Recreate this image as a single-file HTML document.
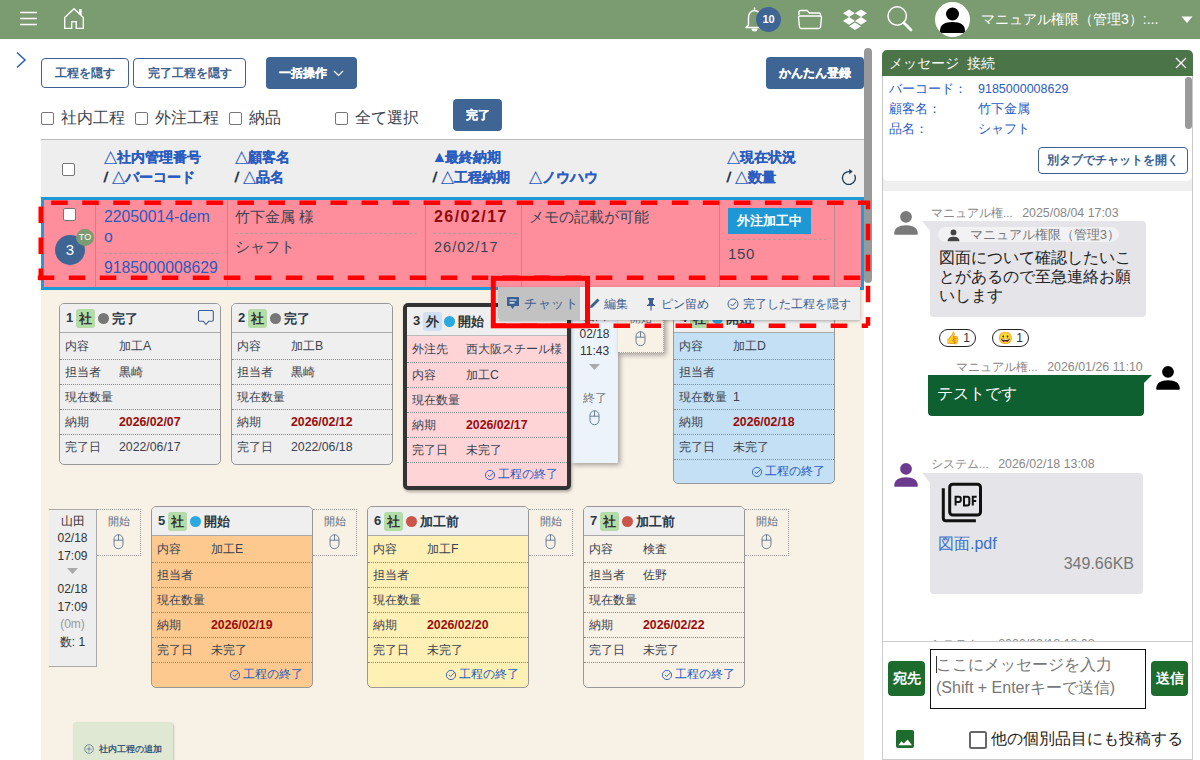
<!DOCTYPE html>
<html><head><meta charset="utf-8">
<style>
*{box-sizing:border-box;margin:0;padding:0}
html,body{width:1200px;height:760px;overflow:hidden;background:#fff;font-family:"Liberation Sans",sans-serif;color:#333}
.abs{position:absolute}
#hdr{position:absolute;left:0;top:0;width:1200px;height:39px;background:#7b9b71}
.btn-o{position:absolute;height:30px;border:1px solid #3d6090;border-radius:4px;background:#fff;color:#3d6090;font-weight:bold;font-size:12px;display:flex;align-items:center;justify-content:center}
.btn-b{position:absolute;background:#3f6594;border-radius:4px;color:#fff;font-weight:bold;font-size:12px;display:flex;align-items:center;justify-content:center}
.cb{position:absolute;width:13px;height:13px;border:1px solid #767676;border-radius:2px;background:#fff}
.t{position:absolute;white-space:nowrap}
.lbl{position:absolute;font-size:16px;color:#3b4350;line-height:16px;white-space:nowrap}
.hd{position:absolute;font-size:14px;font-weight:bold;color:#2a5bbf;line-height:20px;white-space:nowrap}
.hd b{color:#243447;font-weight:bold;-webkit-text-stroke:0.2px #243447;display:inline-block;transform:skewX(-8deg)}
.hd{-webkit-text-stroke:0.15px currentColor}
.hd u{text-decoration:none;-webkit-text-stroke:0;font-weight:normal;font-size:16.5px;line-height:0}
.hd u.f{font-size:16px;letter-spacing:-2px;margin-left:-1.5px}
/* cards */
.card{position:absolute;width:162px;border:1px solid #999;border-radius:5px;background:#efefef;overflow:hidden}
.card .ch{height:29px;border-bottom:1px solid #aaa;background:#efefef;position:relative;font-size:13px;font-weight:bold;color:#2d3846}
.card .row{height:25px;border-bottom:1px dotted #888;position:relative;font-size:12.3px;color:#3b4350}
.card .ch + .row{height:27px}
.card .ch + .row span,.card .ch + .row i{top:6px}
.card .row span{position:absolute;left:5px;top:5px;line-height:15px;white-space:nowrap}
.card .row i{position:absolute;left:59px;top:5px;font-style:normal;line-height:15px;white-space:nowrap}
.card .row i.red{color:#990c0c;font-weight:bold}
.card .ft{height:25px;position:relative;font-size:12.3px;color:#2a5bbf}
.badge{position:absolute;top:5px;height:19px;padding:0 3px;border-radius:3px;background:#b4dca6;color:#333;font-size:13px;font-weight:bold;line-height:19px}
.dot{position:absolute;top:9px;width:11px;height:11px;border-radius:50%}
.btn-b{-webkit-text-stroke:0.2px currentColor}
</style></head><body>
<div id="hdr">
  <svg class="abs" style="left:20px;top:11px" width="18" height="15" viewBox="0 0 18 15"><path d="M0 1.5H17M0 7.5H17M0 13.5H17" stroke="#fff" stroke-width="1.6"/></svg>
  <svg class="abs" style="left:56px;top:4px" width="36" height="30" viewBox="0 0 36 30"><path d="M23.1 5.1 H25.7 V11.6 L23.1 9.2Z" fill="#fff"/><path d="M8.7 24.4 V13.6 L18 4.8 L27.3 13.6 V24.4 H20.2 V17.6 H15.7 V24.4 Z" fill="none" stroke="#fff" stroke-width="1.4" stroke-linejoin="miter"/></svg>
  <svg class="abs" style="left:745px;top:6px" width="19" height="27" viewBox="0 0 19 27"><path d="M9.5 1.5 V3.5 M3.5 19 V11 A6 6.5 0 0 1 15.5 11 V19 L18 21.5 H1 L3.5 19Z" fill="none" stroke="#fff" stroke-width="1.4" stroke-linejoin="round"/><path d="M6.5 22.5 A3 3 0 0 0 12.5 22.5Z" fill="#fff"/></svg>
  <div class="abs" style="left:756px;top:7px;width:25px;height:25px;border-radius:50%;background:#3f6594;color:#fff;font-weight:bold;font-size:11px;text-align:center;line-height:25px">10</div>
  <svg class="abs" style="left:797px;top:9px" width="26" height="21" viewBox="0 0 26 21"><path d="M2 6 V3 Q2 1.5 3.5 1.5 H10 L12.5 4 H22 Q23.5 4 23.5 5.5 V7" fill="none" stroke="#fff" stroke-width="1.4" stroke-linejoin="round"/><path d="M1.5 8.5 Q1.5 7 3 7 H23 Q24.5 7 24.5 8.5 L23.5 18 Q23.3 19.5 21.8 19.5 H4.2 Q2.7 19.5 2.5 18Z" fill="none" stroke="#fff" stroke-width="1.4" stroke-linejoin="round"/></svg>
  <svg class="abs" style="left:842px;top:9px" width="26" height="22" viewBox="0 0 26 22"><path d="M7 0.5 L13 4.3 L7 8.1 L1 4.3Z M19 0.5 L25 4.3 L19 8.1 L13 4.3Z M7 8.1 L13 11.9 L7 15.7 L1 11.9Z M19 8.1 L25 11.9 L19 15.7 L13 11.9Z M13 13.5 L19 17.3 L13 21.1 L7 17.3Z" fill="#fff"/></svg>
  <svg class="abs" style="left:886px;top:6px" width="27" height="26" viewBox="0 0 27 26"><circle cx="11.2" cy="10" r="9.2" fill="none" stroke="#fff" stroke-width="1.5"/><path d="M17.8 16.8 L25 24" stroke="#fff" stroke-width="2.8" stroke-linecap="round"/></svg>
  <div class="abs" style="left:935px;top:2px;width:35px;height:35px;border-radius:50%;background:#fff;overflow:hidden">
   <svg width="35" height="35" viewBox="0 0 35 35"><circle cx="17.5" cy="12" r="6.5" fill="#000"/><path d="M5 29 Q5 20 17.5 20 Q30 20 30 29 V31 H5Z" fill="#000"/></svg>
  </div>
  <div class="t" style="left:981px;top:10px;font-size:14px;color:#fff;line-height:18px">マニュアル権限（管理3）:...</div>
  <svg class="abs" style="left:1181px;top:16px" width="12" height="8" viewBox="0 0 12 8"><path d="M0.5 0.5H11.5L6 7Z" fill="#fff"/></svg>
</div>

<!-- main area -->
<svg class="abs" style="left:15px;top:51px" width="12" height="18" viewBox="0 0 12 18"><path d="M2 1.5 L10 9 L2 16.5" fill="none" stroke="#2a5bbf" stroke-width="1.5"/></svg>
<div class="btn-o" style="left:41px;top:58px;width:88px">工程を隠す</div>
<div class="btn-o" style="left:133px;top:58px;width:113px">完了工程を隠す</div>
<div class="btn-b" style="left:266px;top:57px;width:91px;height:32px">一括操作 <svg style="margin-left:6px" width="11" height="7" viewBox="0 0 11 7"><path d="M1 1 L5.5 5.5 L10 1" fill="none" stroke="#fff" stroke-width="1.2"/></svg></div>
<div class="btn-b" style="left:766px;top:57px;width:98px;height:32px">かんたん登録</div>

<div class="cb" style="left:41px;top:112px"></div><div class="lbl" style="left:61px;top:110px">社内工程</div>
<div class="cb" style="left:135px;top:112px"></div><div class="lbl" style="left:155px;top:110px">外注工程</div>
<div class="cb" style="left:229px;top:112px"></div><div class="lbl" style="left:249px;top:110px">納品</div>
<div class="cb" style="left:335px;top:112px"></div><div class="lbl" style="left:355px;top:110px">全て選択</div>
<div class="btn-b" style="left:453px;top:99px;width:49px;height:32px">完了</div>

<!-- table header -->
<div class="abs" style="left:41px;top:139px;width:823px;height:58px;background:#eeeeee;border-top:1px solid #bbb"></div>
<div class="cb" style="left:62px;top:163px"></div>
<div class="hd" style="left:104px;top:147px"><u>△</u>社内管理番号<br><b>/</b> <u>△</u>バーコード</div>
<div class="hd" style="left:235px;top:147px"><u>△</u>顧客名<br><b>/</b> <u>△</u>品名</div>
<div class="hd" style="left:433px;top:147px"><u class="f">▲</u>最終納期<br><b>/</b> <u>△</u>工程納期</div>
<div class="hd" style="left:529px;top:167px"><u>△</u>ノウハウ</div>
<div class="hd" style="left:727px;top:147px"><u>△</u>現在状況<br><b>/</b> <u>△</u>数量</div>
<svg class="abs" style="left:840px;top:167px" width="18" height="18" viewBox="0 0 18 18"><path d="M9.4 4.55 A6.45 6.45 0 1 0 14.49 7.78" fill="none" stroke="#1f3a52" stroke-width="1.3"/><path d="M9.2 2 L12.7 4.6 L9.2 7.2Z" fill="#1f3a52"/></svg>

<!-- beige content -->
<div class="abs" style="left:41px;top:288px;width:823px;height:472px;background:#f8f1e6"></div>

<!-- selected row -->
<div class="abs" style="left:41px;top:197px;width:823px;height:93px;background:#ff8e9c;border:3px solid #1e9bd7"></div>
<div class="abs" style="left:95px;top:200px;width:1px;height:87px;background:#c0868d"></div>
<div class="abs" style="left:227px;top:200px;width:1px;height:87px;background:#c0868d"></div>
<div class="abs" style="left:425px;top:200px;width:1px;height:87px;background:#c0868d"></div>
<div class="abs" style="left:521px;top:200px;width:1px;height:87px;background:#c0868d"></div>
<div class="abs" style="left:719px;top:200px;width:1px;height:87px;background:#c0868d"></div>
<div class="abs" style="left:834px;top:200px;width:1px;height:87px;background:#c0868d"></div>
<div class="cb" style="left:63px;top:208px"></div>
<div class="abs" style="left:55px;top:235px;width:30px;height:30px;border-radius:50%;background:#3f6594;color:#fff;font-size:15px;text-align:center;line-height:30px">3</div>
<div class="abs" style="left:76px;top:229px;width:18px;height:17px;border-radius:50%;background:#7b9b71;color:#fff;font-size:9px;text-align:center;line-height:17px">TO</div>
<div class="t" style="left:104px;top:207px;font-size:15.75px;line-height:20px;color:#2a5bbf">22050014-dem<br>o</div>
<div class="abs" style="left:104px;top:253px;width:115px;border-top:1px dashed #b99"></div>
<div class="t" style="left:104px;top:259px;font-size:15.75px;line-height:18px;color:#2a5bbf">9185000008629</div>
<div class="t" style="left:235px;top:207px;font-size:14.5px;line-height:20px;color:#3b4350">竹下金属 様</div>
<div class="abs" style="left:235px;top:233px;width:182px;border-top:1px dashed #b99"></div>
<div class="t" style="left:235px;top:237px;font-size:14.5px;line-height:20px;color:#3b4350">シャフト</div>
<div class="t" style="left:434px;top:207px;font-size:16px;line-height:20px;color:#8f0a0a;font-weight:bold;letter-spacing:1.45px">26/02/17</div>
<div class="abs" style="left:433px;top:233px;width:84px;border-top:1px dashed #b99"></div>
<div class="t" style="left:434px;top:237px;font-size:14.5px;line-height:20px;color:#3b4350;letter-spacing:1px">26/02/17</div>
<div class="t" style="left:529px;top:207px;font-size:14.5px;line-height:20px;color:#3b4350">メモの記載が可能</div>
<div class="abs" style="left:728px;top:208px;width:83px;height:26px;background:#1e98d4;color:#fff;font-weight:bold;font-size:13px;text-align:center;line-height:26px">外注加工中</div>
<div class="abs" style="left:727px;top:239px;width:100px;border-top:1px dashed #b99"></div>
<div class="t" style="left:728px;top:244px;font-size:15px;line-height:20px;color:#3b4350;letter-spacing:0.6px">150</div>


<!-- mouse icon symbol -->
<svg width="0" height="0" style="position:absolute"><defs>
<g id="mouse"><rect x="1" y="0.7" width="9" height="14" rx="4.5" fill="none" stroke="#6a7f95" stroke-width="1"/><path d="M1 6.2H10M5.5 0.7V6.2" stroke="#6a7f95" stroke-width="1"/></g>
<g id="chk2"><circle cx="6" cy="6" r="5" fill="none" stroke="#3d6090" stroke-width="1"/><path d="M3.5 6 L5.5 8 L9 4" fill="none" stroke="#3d6090" stroke-width="1"/></g><g id="chk"><circle cx="6" cy="6" r="4.6" fill="none" stroke="#2a5bbf" stroke-width="0.9"/><path d="M3.8 5.8 L5.6 7.6 L9.8 3.2" fill="none" stroke="#2a5bbf" stroke-width="0.9"/></g>
</defs></svg>

<!-- card 1 -->
<div class="card" style="left:59px;top:303px;height:162px">
 <div class="ch"><span class="t" style="left:6px;top:6px">1</span><span class="badge" style="left:16px">社</span><span class="dot" style="left:38px;background:#777"></span><span class="t" style="left:52px;top:6px">完了</span>
 <svg class="abs" style="left:137px;top:5px" width="18" height="17" viewBox="0 0 18 17"><path d="M1.5 3 Q1.5 1.5 3 1.5 H14.8 Q16.3 1.5 16.3 3 V10.7 Q16.3 12.2 14.8 12.2 H11.8 L9 15.5 L6.2 12.2 H3 Q1.5 12.2 1.5 10.7Z" fill="none" stroke="#3d6090" stroke-width="1.1" stroke-linejoin="round"/></svg></div>
 <div class="row"><span>内容</span><i>加工A</i></div>
 <div class="row"><span>担当者</span><i>黒崎</i></div>
 <div class="row"><span>現在数量</span><i></i></div>
 <div class="row"><span>納期</span><i class="red">2026/02/07</i></div>
 <div class="row" style="border-bottom:none"><span>完了日</span><i>2022/06/17</i></div>
</div>
<!-- card 2 -->
<div class="card" style="left:231px;top:303px;height:162px">
 <div class="ch"><span class="t" style="left:6px;top:6px">2</span><span class="badge" style="left:16px">社</span><span class="dot" style="left:38px;background:#777"></span><span class="t" style="left:52px;top:6px">完了</span></div>
 <div class="row"><span>内容</span><i>加工B</i></div>
 <div class="row"><span>担当者</span><i>黒崎</i></div>
 <div class="row"><span>現在数量</span><i></i></div>
 <div class="row"><span>納期</span><i class="red">2026/02/12</i></div>
 <div class="row" style="border-bottom:none"><span>完了日</span><i>2022/06/18</i></div>
</div>

<!-- timeline after card3 -->
<div class="abs" style="left:571px;top:300px;width:47px;height:163px;background:#edf3fb;box-shadow:2px 2px 5px rgba(0,0,0,.35)">
 <div class="t" style="left:0;width:47px;text-align:center;top:8px;font-size:12px;line-height:17.5px;color:#333">山田<br>02/18<br>11:43</div>
 <svg class="abs" style="left:18px;top:64px" width="11" height="7"><path d="M0 0H11L5.5 6Z" fill="#aaa"/></svg>
 <div class="t" style="left:0;width:47px;text-align:center;top:90px;font-size:12px;color:#777">終了</div>
 <svg class="abs" style="left:18px;top:110px" width="11" height="16"><use href="#mouse"/></svg>
</div>
<div class="abs" style="left:618px;top:306px;width:46px;height:47px;border:1px dotted #999;border-left:none;background:#f8f1e6;box-shadow:2px 2px 5px rgba(0,0,0,.35)">
 <div class="t" style="left:0;width:45px;text-align:center;top:4px;font-size:11px;color:#5a6f86">開始</div>
 <svg class="abs" style="left:17px;top:24px" width="11" height="16"><use href="#mouse"/></svg>
</div>

<!-- card 3 (selected) -->
<div class="abs" style="left:403px;top:303px;width:168px;height:187px;border:4px solid #333;border-radius:5px;background:#ffd4d7;overflow:hidden;box-shadow:1px 2px 3px rgba(0,0,0,.3)">
 <div style="position:relative;height:29px;background:#efefef;border-bottom:1px solid #bbb;font-size:13px;font-weight:bold;color:#333"><span class="t" style="left:6px;top:6px">3</span><span class="badge" style="left:16px;background:#cde0f5">外</span><span class="dot" style="left:37px;background:#2aa9e0"></span><span class="t" style="left:51px;top:6px">開始</span></div>
 <div class="card" style="position:relative;left:0;top:0;width:160px;border:none;border-radius:0;background:transparent">
 <div class="row" style="height:27px"><span style="top:6px">外注先</span><i style="top:6px">西大阪スチール様</i></div>
 <div class="row"><span>内容</span><i>加工C</i></div>
 <div class="row"><span>現在数量</span><i></i></div>
 <div class="row"><span>納期</span><i class="red">2026/02/17</i></div>
 <div class="row"><span>完了日</span><i>未完了</i></div>
 <div class="ft"><svg class="abs" style="left:77px;top:6px" width="12" height="12"><use href="#chk"/></svg><span class="t" style="left:91px;top:3px">工程の終了</span></div>
 </div>
</div>

<!-- card 4 -->
<div class="card" style="left:673px;top:303px;height:181px;background:#c4e0f4">
 <div class="ch"><span class="t" style="left:6px;top:6px">4</span><span class="badge" style="left:16px">社</span><span class="dot" style="left:38px;background:#2aa9e0"></span><span class="t" style="left:52px;top:6px">開始</span></div>
 <div class="row"><span>内容</span><i>加工D</i></div>
 <div class="row"><span>担当者</span><i></i></div>
 <div class="row"><span>現在数量</span><i>1</i></div>
 <div class="row"><span>納期</span><i class="red">2026/02/18</i></div>
 <div class="row"><span>完了日</span><i>未完了</i></div>
 <div class="ft"><svg class="abs" style="left:77px;top:6px" width="12" height="12"><use href="#chk"/></svg><span class="t" style="left:91px;top:3px">工程の終了</span></div>
</div>

<!-- bottom row -->
<div class="abs" style="left:49px;top:509px;width:48px;height:158px;background:#eeeeee;border-top:1px solid #aaa;border-right:1px solid #aaa;border-bottom:1px solid #aaa">
 <div class="t" style="left:0;width:47px;text-align:center;top:3px;font-size:12px;line-height:17.3px;color:#333">山田<br>02/18<br>17:09</div>
 <svg class="abs" style="left:18px;top:58px" width="11" height="7"><path d="M0 0H11L5.5 6Z" fill="#aaa"/></svg>
 <div class="t" style="left:0;width:47px;text-align:center;top:71px;font-size:12px;line-height:17.5px;color:#333">02/18<br>17:09<br><span style="color:#999">(0m)</span><br>数: 1</div>
</div>
<div class="abs" style="left:97px;top:509px;width:44px;height:47px;border:1px dotted #999;border-left:none">
 <div class="t" style="left:0;width:43px;text-align:center;top:4px;font-size:11px;color:#5a6f86">開始</div>
 <svg class="abs" style="left:16px;top:24px" width="11" height="16"><use href="#mouse"/></svg></div>
<div class="card" style="left:151px;top:506px;height:182px;background:#fec98e">
 <div class="ch" style="background:#efefef"><span class="t" style="left:6px;top:6px">5</span><span class="badge" style="left:16px">社</span><span class="dot" style="left:38px;background:#2aa9e0"></span><span class="t" style="left:52px;top:6px">開始</span></div>
 <div class="row"><span>内容</span><i>加工E</i></div><div class="row"><span>担当者</span><i></i></div><div class="row"><span>現在数量</span><i></i></div><div class="row"><span>納期</span><i class=red>2026/02/19</i></div><div class="row"><span>完了日</span><i>未完了</i></div>
 <div class="ft"><svg class="abs" style="left:77px;top:6px" width="12" height="12"><use href="#chk"/></svg><span class="t" style="left:91px;top:3px">工程の終了</span></div>
</div>
<div class="abs" style="left:313px;top:509px;width:44px;height:47px;border:1px dotted #999;border-left:none">
 <div class="t" style="left:0;width:43px;text-align:center;top:4px;font-size:11px;color:#5a6f86">開始</div>
 <svg class="abs" style="left:16px;top:24px" width="11" height="16"><use href="#mouse"/></svg></div>
<div class="card" style="left:367px;top:506px;height:182px;background:#fff0b6">
 <div class="ch" style="background:#efefef"><span class="t" style="left:6px;top:6px">6</span><span class="badge" style="left:16px">社</span><span class="dot" style="left:38px;background:#cc5549"></span><span class="t" style="left:52px;top:6px">加工前</span></div>
 <div class="row"><span>内容</span><i>加工F</i></div><div class="row"><span>担当者</span><i></i></div><div class="row"><span>現在数量</span><i></i></div><div class="row"><span>納期</span><i class=red>2026/02/20</i></div><div class="row"><span>完了日</span><i>未完了</i></div>
 <div class="ft"><svg class="abs" style="left:77px;top:6px" width="12" height="12"><use href="#chk"/></svg><span class="t" style="left:91px;top:3px">工程の終了</span></div>
</div>
<div class="abs" style="left:529px;top:509px;width:44px;height:47px;border:1px dotted #999;border-left:none">
 <div class="t" style="left:0;width:43px;text-align:center;top:4px;font-size:11px;color:#5a6f86">開始</div>
 <svg class="abs" style="left:16px;top:24px" width="11" height="16"><use href="#mouse"/></svg></div>
<div class="card" style="left:583px;top:506px;height:182px;background:#f8f1e6">
 <div class="ch" style="background:#efefef"><span class="t" style="left:6px;top:6px">7</span><span class="badge" style="left:16px">社</span><span class="dot" style="left:38px;background:#cc5549"></span><span class="t" style="left:52px;top:6px">加工前</span></div>
 <div class="row"><span>内容</span><i>検査</i></div><div class="row"><span>担当者</span><i>佐野</i></div><div class="row"><span>現在数量</span><i></i></div><div class="row"><span>納期</span><i class=red>2026/02/22</i></div><div class="row"><span>完了日</span><i>未完了</i></div>
 <div class="ft"><svg class="abs" style="left:77px;top:6px" width="12" height="12"><use href="#chk"/></svg><span class="t" style="left:91px;top:3px">工程の終了</span></div>
</div>
<div class="abs" style="left:745px;top:509px;width:44px;height:47px;border:1px dotted #999;border-left:none">
 <div class="t" style="left:0;width:43px;text-align:center;top:4px;font-size:11px;color:#5a6f86">開始</div>
 <svg class="abs" style="left:16px;top:24px" width="11" height="16"><use href="#mouse"/></svg></div>

<div class="abs" style="left:73px;top:722px;width:100px;height:50px;background:#dfe8d2;border-radius:4px;box-shadow:1px 1px 2px rgba(0,0,0,.2)">
 <svg class="abs" style="left:11px;top:22px" width="10" height="10" viewBox="0 0 10 10"><circle cx="5" cy="5" r="4.3" fill="none" stroke="#6a7f95" stroke-width="0.9"/><path d="M5 2.5V7.5M2.5 5H7.5" stroke="#6a7f95" stroke-width="0.9"/></svg>
 <div class="t" style="left:26px;top:21px;font-size:9.3px;font-weight:bold;color:#3d5a7a">社内工程の追加</div>
</div>


<div class="abs" style="left:864px;top:48px;width:8px;height:235px;background:#999;border-radius:4px"></div>
<!-- context menu -->
<div class="abs" style="left:498px;top:287px;width:362px;height:33px;background:#efefef;box-shadow:0 1px 3px rgba(0,0,0,.3)">
 <div class="abs" style="left:0;top:0;width:82px;height:33px;background:#c2c2c2;border-radius:0 0 0 3px"></div>
 <svg class="abs" style="left:8px;top:9px" width="14" height="14" viewBox="0 0 14 14"><path d="M1.5 1 H12.5 Q13 1 13 1.5 V9.5 Q13 10 12.5 10 H8.5 L6.5 13 L4.5 10 H1.5 Q1 10 1 9.5 V1.5 Q1 1 1.5 1Z" fill="#3d6090"/><path d="M3.5 4H10.5M3.5 6.8H8.5" stroke="#fff" stroke-width="1.2"/></svg>
 <div class="t" style="left:26px;top:9px;font-size:12.5px;color:#3d6090;letter-spacing:0.7px">チャット</div>
 <svg class="abs" style="left:91px;top:10px" width="12" height="12" viewBox="0 0 12 12"><path d="M1 11 L1.5 8.5 L8.5 1.5 L10.5 3.5 L3.5 10.5 Z" fill="#3d6090"/></svg>
 <div class="t" style="left:106px;top:9px;font-size:12.2px;color:#3d6090">編集</div>
 <svg class="abs" style="left:148px;top:10px" width="10" height="14" viewBox="0 0 10 14"><path d="M2 1H8V2.5L7 3.2V6.5L9 8.3V9H5.6V13.5H4.4V9H1V8.3L3 6.5V3.2L2 2.5Z" fill="#3d6090"/></svg>
 <div class="t" style="left:163px;top:9px;font-size:12.2px;color:#3d6090">ピン留め</div>
 <svg class="abs" style="left:229px;top:11px" width="12" height="12"><use href="#chk2"/></svg>
 <div class="t" style="left:245px;top:9px;font-size:12.2px;color:#3d6090">完了した工程を隠す</div>
</div>

<!-- red dashed outline -->
<svg class="abs" style="left:0;top:0;pointer-events:none" width="880" height="340">
 <path d="M40.75 202.75 H868 V325.8" fill="none" stroke="#f00" stroke-width="4.5" stroke-dasharray="16.5 14.53" stroke-dashoffset="20.53"/>
 <path d="M868 325.8 H491" fill="none" stroke="#f00" stroke-width="4.5" stroke-dasharray="16.5 14.53" stroke-dashoffset="10.23"/>
 <path d="M37.8 277.8 H868" fill="none" stroke="#f00" stroke-width="4.5" stroke-dasharray="16.5 14.5"/>
 <path d="M40.75 202.75 V280.3" fill="none" stroke="#f00" stroke-width="4.5" stroke-dasharray="16.5 14.53" stroke-dashoffset="27.38"/>
 <rect x="493.3" y="278.3" width="94.2" height="47.5" fill="none" stroke="#f00" stroke-width="5"/>
</svg>


<!-- right panel -->
<div class="abs" style="left:882px;top:49px;width:311px;height:711px;background:#fff">
 <div class="abs" style="left:0;top:1px;width:311px;height:26px;background:#4b7449;border-radius:5px 5px 0 0"></div>
 <div class="t" style="left:7px;top:6px;font-size:14px;color:#fff;line-height:17px">メッセージ&nbsp;&nbsp;接続</div>
 <svg class="abs" style="left:293px;top:8px" width="12" height="12" viewBox="0 0 12 12"><path d="M1 1L11 11M11 1L1 11" stroke="#fff" stroke-width="1.3"/></svg>
 <div class="abs" style="left:0;top:27px;width:311px;height:684px;border-left:1px solid #c8c8c8;border-right:1px solid #c8c8c8;border-bottom:1px solid #c8c8c8;border-radius:0 0 4px 4px"></div>
 <div class="abs" style="left:1px;top:126px;width:309px;height:16px;background:#efefef"></div>
 <div class="abs" style="left:1px;top:27px;width:309px;height:105px;background:#fff;border-radius:0 0 5px 5px"></div>
 <div class="t" style="left:7px;top:31px;font-size:12.5px;line-height:19.8px;color:#2a5bbf">バーコード：<br>顧客名：<br>品名：</div>
 <div class="t" style="left:96px;top:31px;font-size:12.5px;line-height:19.8px;color:#2a5bbf">9185000008629<br>竹下金属<br>シャフト</div>
 <div class="abs" style="left:303px;top:28px;width:7px;height:52px;background:#999;border-radius:4px"></div>
 <div class="btn-o" style="left:156px;top:98px;width:150px;height:27px;font-size:12px">別タブでチャットを開く</div>
  <div class="abs" style="left:0;top:141px;width:311px;height:570px;overflow:hidden">
  <svg width="0" height="0" style="position:absolute"><defs><g id="person"><circle cx="13" cy="6.8" r="5.9"/><path d="M1.2 24 C1.2 18 6 15.3 13 15.3 C20 15.3 24.8 18 24.8 24 Q24.8 24.7 24 24.7 H2 Q1.2 24.7 1.2 24Z"/></g></defs></svg>
  <!-- msg 1 -->
  <svg class="abs" style="left:11px;top:20px" width="26" height="26" viewBox="0 0 26 26" fill="#7a7a7a"><use href="#person"/></svg>
  <div class="t" style="left:49px;top:16px;font-size:11.5px;color:#888;line-height:14px">マニュアル権...&nbsp;&nbsp;&nbsp;<span style="font-size:12.4px">2025/08/04 17:03</span></div>
  <div class="abs" style="left:48px;top:31px;width:216px;height:96px;background:#e4e4e9;border-radius:0 4px 4px 4px"></div>
  <svg class="abs" style="left:40px;top:31px" width="9" height="12"><path d="M0 0H9V11Z" fill="#e4e4e9"/></svg>
  <div class="abs" style="left:56px;top:37px;width:181px;height:15px;background:#f2f2f5;border-radius:8px"></div>
  <svg class="abs" style="left:65px;top:39px" width="13" height="13" viewBox="0 0 26 26" fill="#444"><use href="#person"/></svg>
  <div class="t" style="left:88px;top:38px;font-size:12.5px;color:#777;line-height:14px">マニュアル権限（管理3）</div>
  <div class="t" style="left:57px;top:58px;font-size:16px;color:#222;line-height:19px;white-space:normal;width:200px">図面について確認したいことがあるので至急連絡お願いします</div>
  <div class="abs" style="left:57px;top:139px;width:37px;height:18px;border:1.3px solid #222;border-radius:9px;font-size:12px;line-height:16px;padding-left:5px">👍 1</div>
  <div class="abs" style="left:110px;top:139px;width:37px;height:18px;border:1.3px solid #222;border-radius:9px;font-size:12px;line-height:16px;padding-left:5px">😀 1</div>
  <!-- msg 2 -->
  <div class="t" style="left:74px;top:170px;font-size:11.5px;color:#888;line-height:14px">マニュアル権...&nbsp;&nbsp;&nbsp;<span style="font-size:12.4px">2026/01/26 11:10</span></div>
  <div class="abs" style="left:46px;top:185px;width:216px;height:41px;background:#0e6030;border-radius:0 0 4px 4px"></div>
  <svg class="abs" style="left:261px;top:185px" width="9" height="10"><path d="M0 0H9L0 9Z" fill="#0e6030"/></svg>
  <div class="t" style="left:55px;top:194px;font-size:16px;color:#fff;line-height:19px">テストです</div>
  <svg class="abs" style="left:273px;top:175px" width="26" height="26" viewBox="0 0 26 26" fill="#000"><use href="#person"/></svg>
  <!-- msg 3 -->
  <svg class="abs" style="left:11px;top:272px" width="26" height="26" viewBox="0 0 26 26" fill="#6b3a8e"><use href="#person"/></svg>
  <div class="t" style="left:49px;top:267px;font-size:11.5px;color:#888;line-height:14px">システム...&nbsp;&nbsp;&nbsp;<span style="font-size:12.4px">2026/02/18 13:08</span></div>
  <div class="abs" style="left:48px;top:283px;width:213px;height:121px;background:#e4e4e9;border-radius:0 4px 4px 4px"></div>
  <svg class="abs" style="left:40px;top:283px" width="9" height="12"><path d="M0 0H9V11Z" fill="#e4e4e9"/></svg>
  <svg class="abs" style="left:59px;top:292px" width="42" height="42" viewBox="0 0 42 42"><path d="M2.3 6.3 V36 Q2.3 38.7 5 38.7 H34.9" fill="none" stroke="#111" stroke-width="3"/><rect x="8.7" y="2.2" width="30.8" height="30.8" rx="3" fill="none" stroke="#111" stroke-width="3"/><path d="M14.6 23.6 V14.7 H18 Q19.8 14.7 19.8 16.5 V18.1 Q19.8 19.9 18 19.9 H14.6 M23 14.7 H26.3 Q28.3 14.7 28.3 16.7 V21.5 Q28.3 23.5 26.3 23.5 H23Z M31.8 23.6 V14.7 H35.6 M31.8 18.9 H35.2" fill="none" stroke="#111" stroke-width="2"/></svg>
  <div class="t" style="left:56px;top:344px;font-size:16px;color:#3a6fc8;line-height:19px">図面.pdf</div>
  <div class="t" style="left:150px;top:364px;width:102px;text-align:right;font-size:16px;color:#777;line-height:19px">349.66KB</div>
  <div class="t" style="left:49px;top:447px;font-size:11.5px;color:#888;line-height:14px">システム...&nbsp;&nbsp;&nbsp;<span style="font-size:12.4px">2026/02/18 13:08</span></div>
 </div>
 <!-- input area -->
 <div class="abs" style="left:0;top:592px;width:311px;height:119px;background:#fff;border-top:1px solid #ccc;border-left:1px solid #ccc;border-right:1px solid #ccc;border-bottom:1px solid #ccc"></div>
 <div class="abs" style="left:6px;top:612px;width:37px;height:35px;background:#1e6b2e;border-radius:4px;color:#fff;font-weight:bold;font-size:14px;text-align:center;line-height:35px">宛先</div>
 <div class="abs" style="left:48px;top:600px;width:216px;height:60px;border:1.5px solid #111;background:#fff"></div>
 <div class="abs" style="left:54px;top:607px;width:1px;height:17px;background:#333"></div>
 <div class="t" style="left:54px;top:605px;font-size:16px;color:#777;line-height:22.5px">ここにメッセージを入力<br>(Shift + Enterキーで送信)</div>
 <div class="abs" style="left:269px;top:612px;width:37px;height:35px;background:#1e6b2e;border-radius:4px;color:#fff;font-weight:bold;font-size:14px;text-align:center;line-height:35px">送信</div>
 <svg class="abs" style="left:14px;top:681px" width="18" height="18" viewBox="0 0 18 18"><rect x="0" y="0" width="18" height="18" rx="2" fill="#1e6b2e"/><path d="M2.3 15.2 L5.5 11.2 L7.8 13.5 L11.6 9.4 L16 15.2Z" fill="#fff"/></svg>
 <div class="abs" style="left:87px;top:682px;width:18px;height:18px;border:2.5px solid #666;border-radius:2.5px;background:#fff"></div>
 <div class="t" style="left:109px;top:680px;font-size:16px;color:#222;line-height:19px">他の個別品目にも投稿する</div>
</div>



</body></html>
